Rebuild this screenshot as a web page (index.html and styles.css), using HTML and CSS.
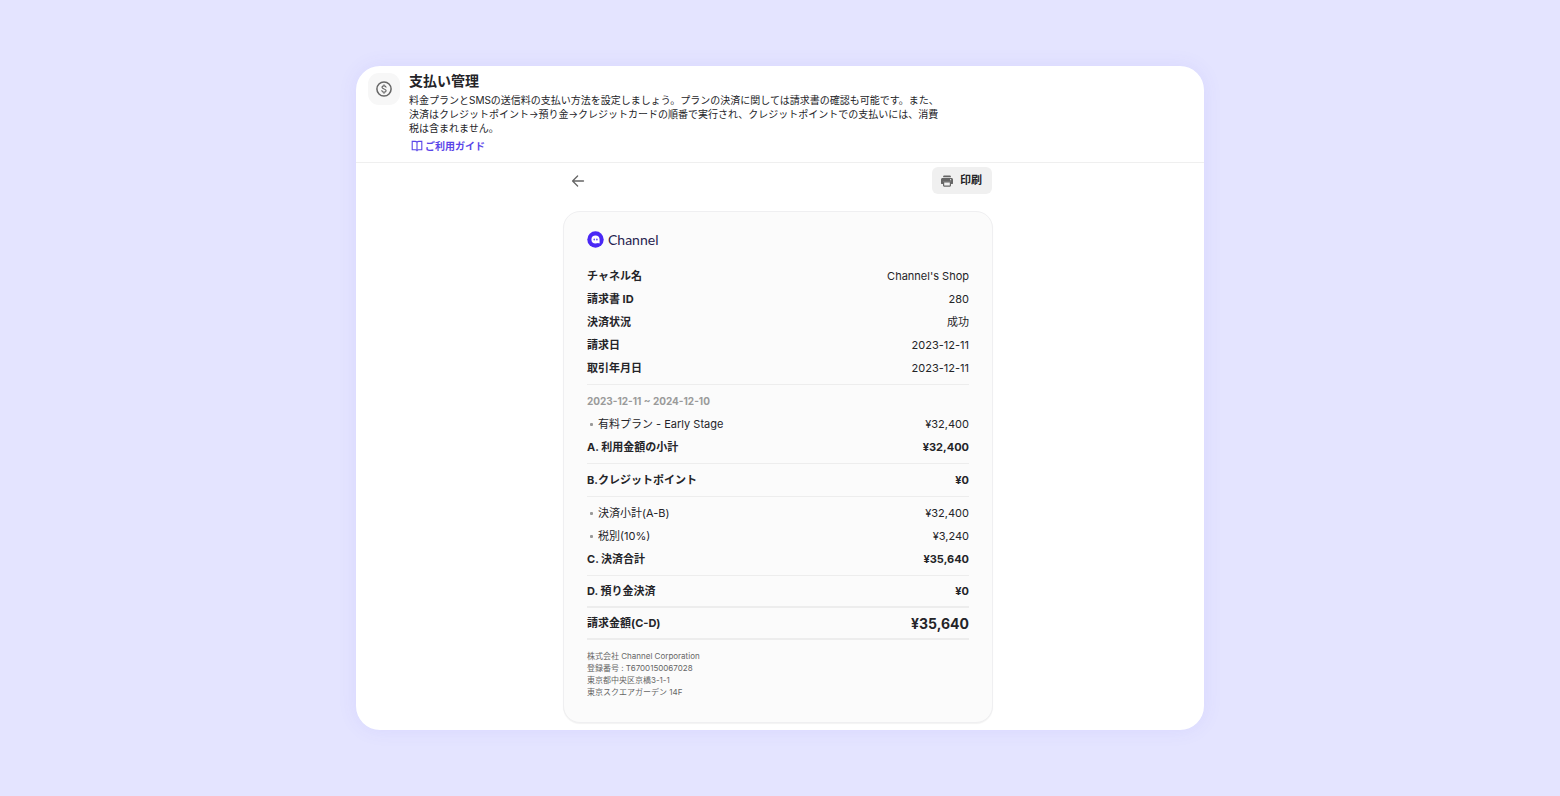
FILE: index.html
```
<!DOCTYPE html>
<html lang="ja">
<head>
  <meta charset="UTF-8">
  <meta name="viewport" content="width=device-width, initial-scale=1.0">
  <title>支払い管理</title>
  <link rel="stylesheet" href="styles.css">
</head>
<body>
  <div class="window">
    <header class="header">
      <div class="header-icon">
        <svg width="16" height="16" viewBox="0 0 16 16" fill="none" stroke="#666" stroke-width="1.5" stroke-linecap="round">
          <circle cx="8" cy="8" r="7.1"/>
          <path d="M10 6.2C9.8 5.2 9 4.8 8 4.8c-1.2 0-2 .6-2 1.5 0 2.2 4.1 1.1 4.1 3.4 0 .9-.9 1.5-2.1 1.5s-2-.5-2.1-1.5M8 3.8v1M8 11.200v1" stroke-width="1.2"/>
        </svg>
      </div>
      <div class="header-text">
        <h1>支払い管理</h1>
        <p>料金プランとSMSの送信料の支払い方法を設定しましょう。プランの決済に関しては請求書の確認も可能です。また、<br>決済はクレジットポイント→預り金→クレジットカードの順番で実行され、クレジットポイントでの支払いには、消費<br>税は含まれません。</p>
        <a class="guide" href="#">
          <svg width="12" height="12" viewBox="0 0 12 12" fill="none" stroke="currentColor" stroke-width="1.1">
            <path d="M6 2.2C5.5 1.6 5 1.4 4.2 1.4H1.2v8.4h3.2c.8 0 1.3.2 1.6.8.3-.6.8-.8 1.6-.8h3.2V1.4h-3C7 1.4 6.5 1.6 6 2.2zM6 2.2v8.4"/>
          </svg>
          ご利用ガイド
        </a>
      </div>
    </header>

    <main class="content">
      <div class="toolbar">
        <button class="back" type="button" aria-label="戻る">
          <svg width="14" height="14" viewBox="0 0 14 14" fill="none" stroke="#666" stroke-width="1.3" stroke-linecap="round" stroke-linejoin="round">
            <path d="M12.5 7H1.8M6.6 2l-5 5 5 5"/>
          </svg>
        </button>
        <button class="print" type="button">
          <svg width="12" height="12" viewBox="0 0 12 12" fill="#666">
            <path d="M3 .4h6c.5 0 .8.3.8.8v1.1H2.200V1.200C2.200.7 2.500.4 3 .4z"/>
            <path d="M1.500 3h9C11.300 3 12 3.700 12 4.500v3.700c0 .5-.4.9-.9.9H10V6.500H2v2.600H.9c-.5 0-.9-.4-.9-.9V4.500C0 3.700.7 3 1.500 3z"/>
            <path d="M2.600 6.900h6.800v3.700c0 .3-.2.500-.5.500H3.100c-.3 0-.5-.2-.5-.5z" fill="none" stroke="#666" stroke-width="1.2"/>
            <circle cx="9.600" cy="4.700" r=".6" fill="#f0f0f0"/>
          </svg>
          印刷
        </button>
      </div>

      <article class="invoice">
        <div class="logo">
          <svg width="17" height="17" viewBox="0 0 17 17">
            <circle cx="8.500" cy="8.500" r="8.200" fill="#4a28f5"/>
            <path d="M8.500 4.600c2.500 0 4.100 1.600 4.100 3.800v3.700c0 .4-.3.500-.6.400l-.8-.4c-.8.300-1.700.5-2.700.5-2.500 0-4.100-1.700-4.100-4.100s1.600-3.900 4.100-3.900z" fill="#fff"/>
            <ellipse cx="7.200" cy="8.400" rx=".7" ry="1" fill="#4a28f5"/>
            <ellipse cx="9.900" cy="8.400" rx=".7" ry="1" fill="#4a28f5"/>
          </svg>
          <span>Channel</span>
        </div>

        <dl class="section">
          <div class="row strong-label"><dt>チャネル名</dt><dd>Channel's Shop</dd></div>
          <div class="row strong-label"><dt>請求書 ID</dt><dd>280</dd></div>
          <div class="row strong-label"><dt>決済状況</dt><dd>成功</dd></div>
          <div class="row strong-label"><dt>請求日</dt><dd>2023-12-11</dd></div>
          <div class="row strong-label"><dt>取引年月日</dt><dd>2023-12-11</dd></div>
        </dl>

        <section class="section">
          <h2 class="period">2023-12-11 ~ 2024-12-10</h2>
          <dl class="rows">
            <div class="row item"><dt>有料プラン - Early Stage</dt><dd>¥32,400</dd></div>
            <div class="row total"><dt>A. 利用金額の小計</dt><dd>¥32,400</dd></div>
          </dl>
        </section>

        <dl class="section">
          <div class="row total"><dt>B.クレジットポイント</dt><dd>¥0</dd></div>
        </dl>

        <dl class="section">
          <div class="row item"><dt>決済小計(A-B)</dt><dd>¥32,400</dd></div>
          <div class="row item"><dt>税別(10%)</dt><dd>¥3,240</dd></div>
          <div class="row total"><dt>C. 決済合計</dt><dd>¥35,640</dd></div>
        </dl>

        <dl class="section thick">
          <div class="row total"><dt>D. 預り金決済</dt><dd>¥0</dd></div>
        </dl>

        <dl class="section thick">
          <div class="row total grand"><dt>請求金額(C-D)</dt><dd>¥35,640</dd></div>
        </dl>

        <address class="company">
          株式会社 Channel Corporation<br>
          登録番号 : T6700150067028<br>
          東京都中央区京橋3-1-1<br>
          東京スクエアガーデン 14F
        </address>
      </article>
    </main>
  </div>
</body>
</html>
```

FILE: styles.css
```
* {
  box-sizing: border-box;
}
body {
  margin: 0;
  min-height: 100vh;
  padding: 66px 24px;
  background-color: #e4e4ff;
  color: #242428;
  font-family: Inter, "Noto Sans CJK JP", sans-serif;
  font-size: 11px;
  line-height: 17px;
}
h1, h2, p, dl, dd {
  margin: 0;
}
button {
  border: 0;
  font: inherit;
  color: inherit;
  cursor: pointer;
}
svg {
  flex: none;
}
.window {
  max-width: 848px;
  margin: 0 auto;
  padding-bottom: 7px;
  background-color: #fff;
  border-radius: 24px;
  box-shadow: 0 0 20px rgba(90, 80, 240, 0.08);
}

/* header */
.header {
  display: flex;
  gap: 9px;
  padding: 7px 12px 9px;
  border-bottom: 1px solid #efefef;
}
.header-icon {
  display: flex;
  align-items: center;
  justify-content: center;
  flex: none;
  width: 32px;
  height: 32px;
  background-color: #f7f7f7;
  border-radius: 11px;
}
h1 {
  font-size: 14px;
  line-height: 16px;
}
.header p {
  margin-top: 4px;
  font-size: 10px;
  line-height: 14px;
}
.guide {
  display: flex;
  align-items: center;
  gap: 2px;
  width: fit-content;
  margin-top: 4px;
  padding: 0 2px;
  color: #5a46e8;
  font-size: 10px;
  font-weight: 600;
  line-height: 14px;
  text-decoration: none;
}

/* content */
.content {
  display: grid;
  grid-template-columns: minmax(0, 430px);
  justify-content: center;
  padding-right: 4px;
}
.toolbar {
  display: flex;
  align-items: center;
  justify-content: space-between;
  padding: 4px 1px 17px 8px;
}
.back {
  display: flex;
  padding: 0;
  background: none;
}
.print {
  display: flex;
  align-items: center;
  gap: 7px;
  padding: 5px 10px 5px 9px;
  background-color: #f0f0f0;
  border-radius: 6px;
  font-weight: 700;
}

/* invoice */
.invoice {
  padding: 19px 23px 24px;
  background-color: #fbfbfb;
  border: 1px solid #efeff1;
  border-radius: 17px;
  box-shadow: 0 1px 1px rgba(0, 0, 0, 0.05);
}
.logo {
  display: flex;
  align-items: center;
  gap: 4px;
  margin-bottom: 12px;
  color: #26224f;
  font-family: Lato, sans-serif;
  font-size: 14px;
}
.section {
  display: flex;
  flex-direction: column;
  gap: 6px;
  padding: 8px 0 7px;
  border-bottom: 1px solid #ededed;
}
.section.thick {
  padding: 7px 0 6px;
  border-bottom: 2px solid #ededed;
}
.rows {
  display: flex;
  flex-direction: column;
  gap: 6px;
}
.row {
  display: flex;
  align-items: center;
  justify-content: space-between;
}
.strong-label dt,
.total {
  font-weight: 700;
}
.item dt::before {
  content: "";
  display: inline-block;
  width: 3px;
  height: 3px;
  margin: 0 5px 2px 3px;
  background-color: #999;
  border-radius: 1px;
}
.grand dd {
  font-size: 14px;
}
.period {
  color: #9a9a9a;
  font-size: 10px;
  font-weight: 700;
}
.company {
  margin-top: 10px;
  color: #666;
  font-size: 8px;
  font-style: normal;
  line-height: 12px;
}
```
